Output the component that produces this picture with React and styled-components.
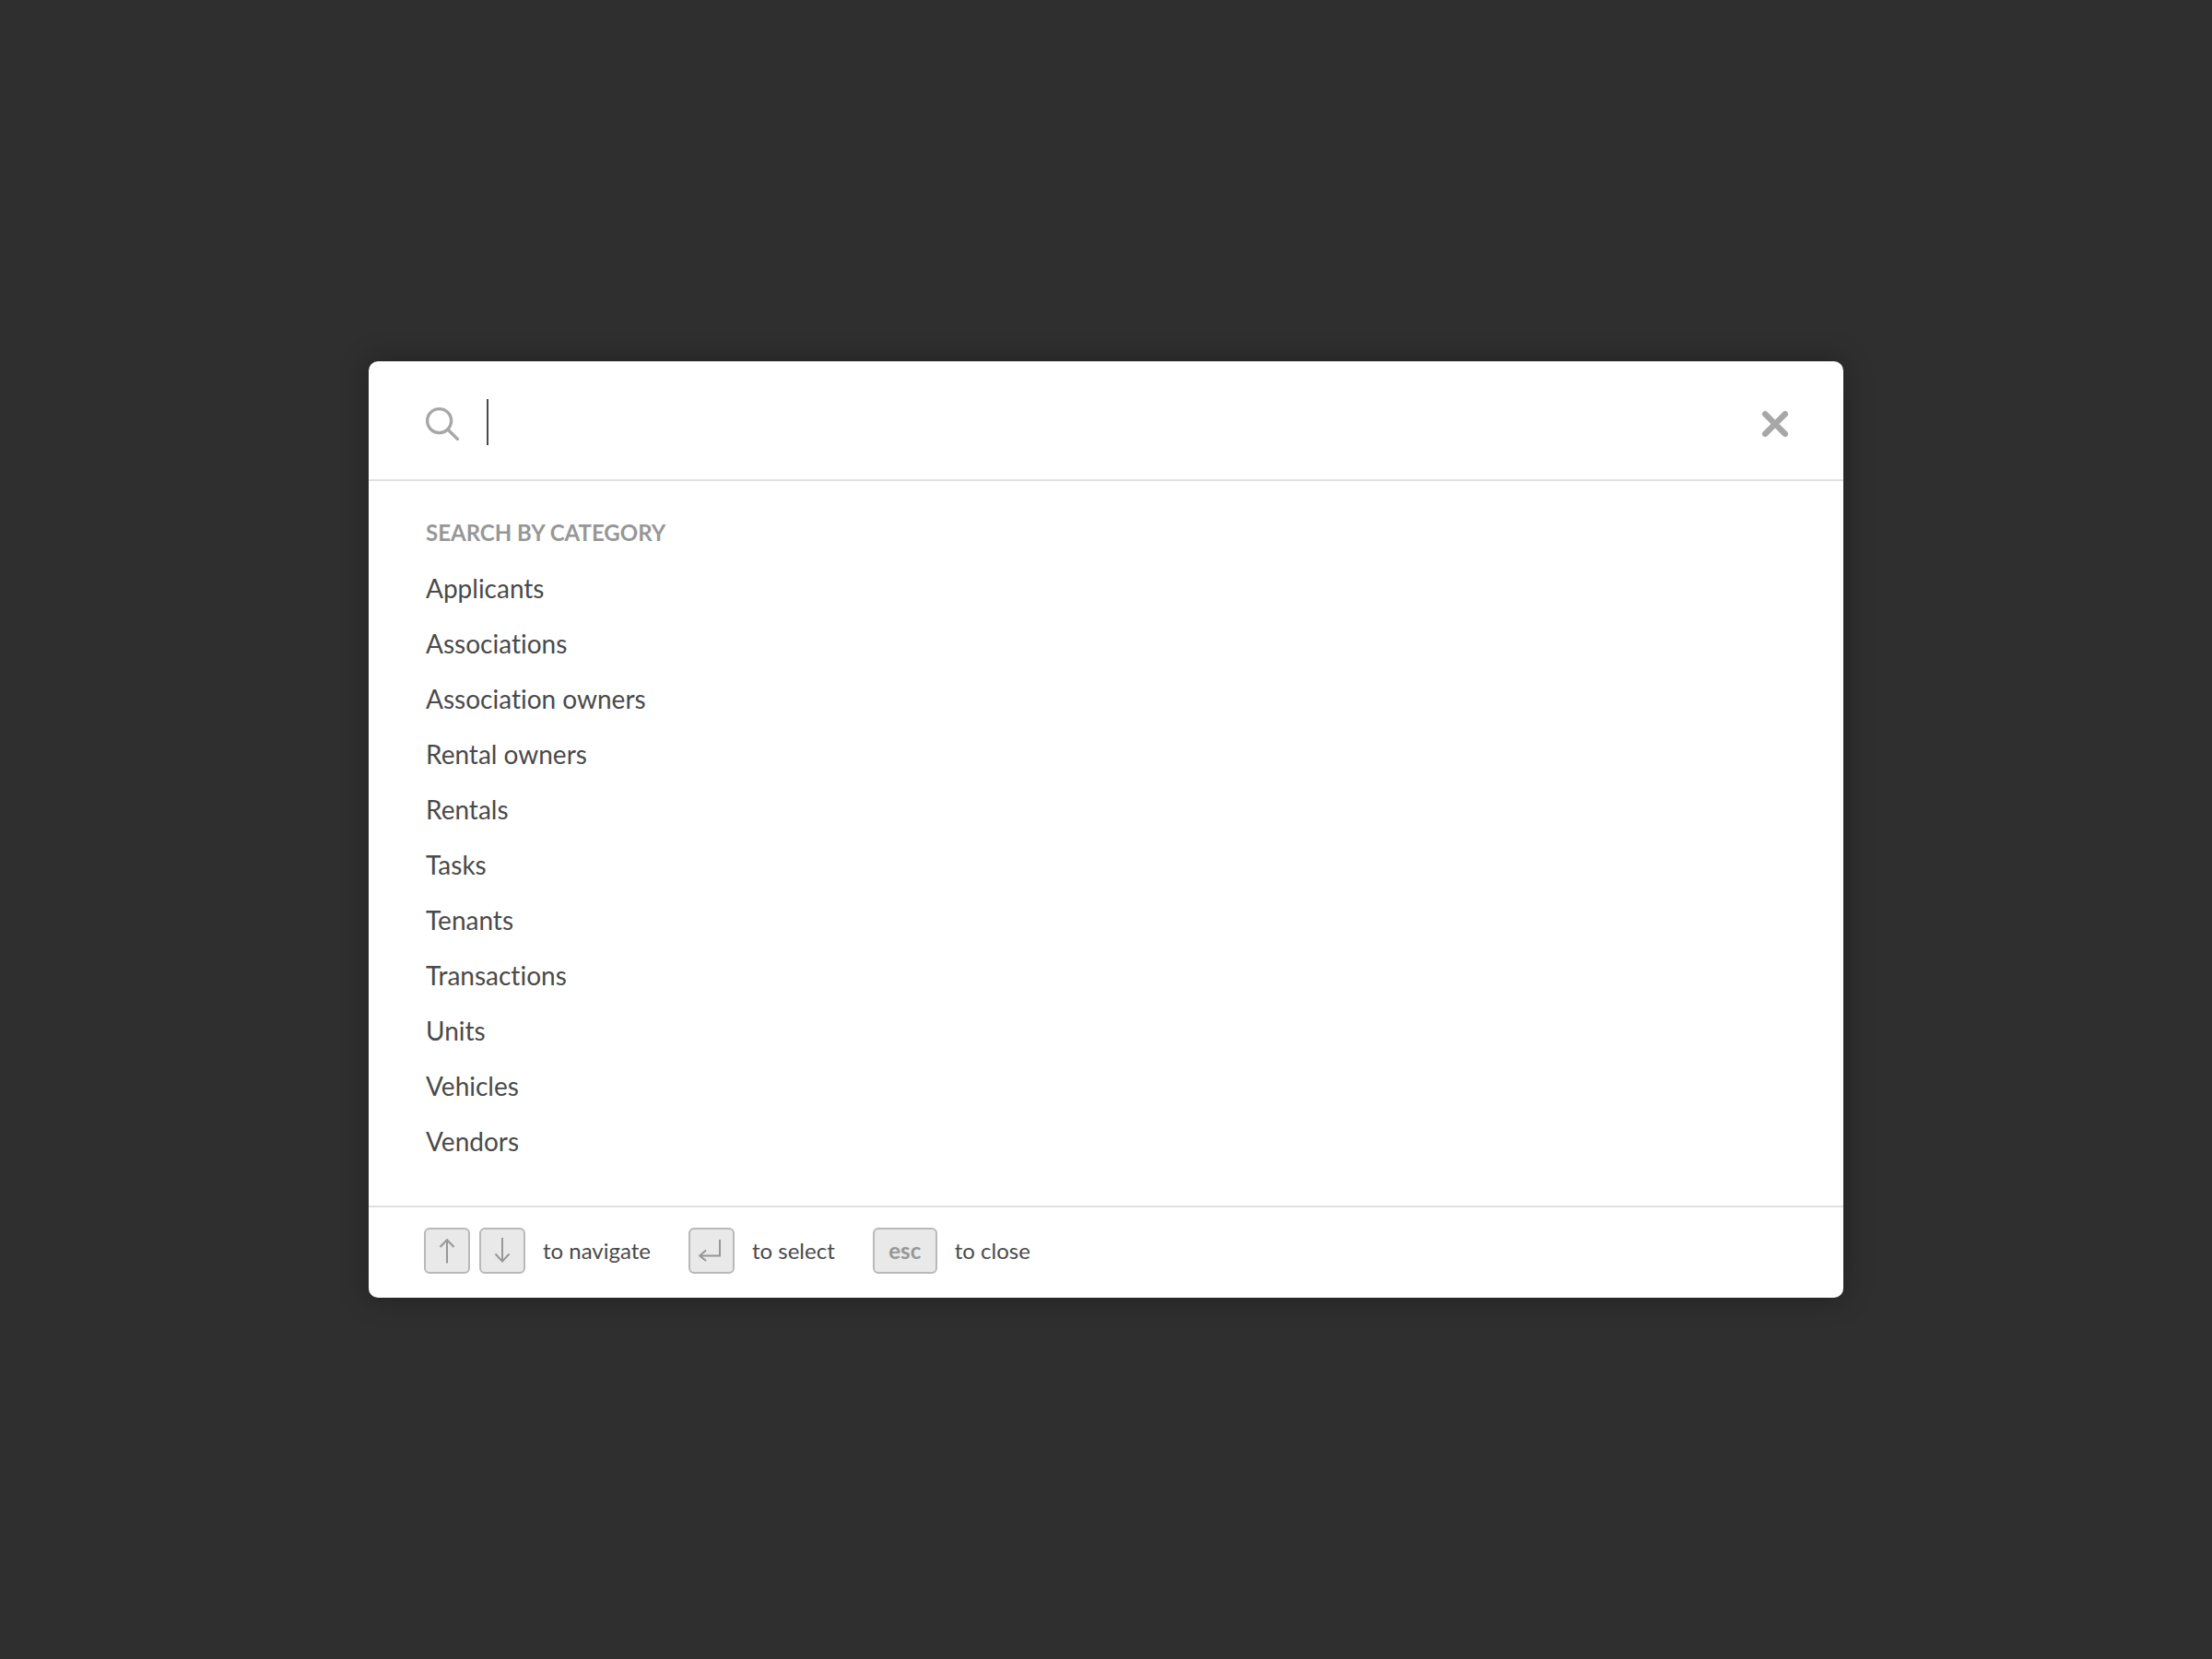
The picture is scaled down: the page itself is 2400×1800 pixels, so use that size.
import React, { useState } from "react";
import styled, { createGlobalStyle } from "styled-components";

const GlobalStyle = createGlobalStyle`
  *, *::before, *::after { box-sizing: border-box; }
  body {
    margin: 0;
    background: #2f2f2f;
    color: #4a4a4a;
    font-family: Lato, "Open Sans", sans-serif;
    font-variant-ligatures: none;
  }
`;

const Page = styled.main`
  min-height: 100vh;
  display: flex;
  align-items: center;
  justify-content: center;
  padding: 40px;
`;

const Dialog = styled.section`
  width: 100%;
  max-width: 1600px;
  background: #ffffff;
  border-radius: 10px;
  box-shadow: 0 0 32px rgba(0, 0, 0, 0.3);
`;

const SearchBar = styled.form`
  display: flex;
  align-items: center;
  padding: 40px 56px 36px 60px;
  border-bottom: 2px solid #e0e0e0;
`;

const SearchLabel = styled.label`
  display: flex;
  margin-right: 28px;
`;

const Caret = styled.span`
  flex: none;
  width: 2px;
  height: 50px;
  background: #4a4a4a;
`;

const SearchInput = styled.input`
  flex: 1;
  min-width: 0;
  height: 52px;
  padding: 0;
  border: 0;
  outline: 0;
  background: transparent;
  color: inherit;
  caret-color: transparent;
  font-family: inherit;
  font-size: 40px;
`;

const CloseButton = styled.button`
  display: flex;
  padding: 0;
  border: 0;
  background: transparent;
  cursor: pointer;
`;

const Categories = styled.div`
  padding: 42px 60px 40px;
`;

const Heading = styled.h2`
  margin: 0 0 16px;
  padding-left: 2px;
  color: #979797;
  font-size: 24px;
  font-weight: 700;
  line-height: 28px;
  text-transform: uppercase;
`;

const CategoryList = styled.ul`
  margin: 0;
  padding: 0;
  list-style: none;
`;

const CategoryButton = styled.button`
  display: block;
  width: 100%;
  height: 60px;
  padding: 0 2px;
  border: 0;
  background: transparent;
  color: inherit;
  font-family: inherit;
  font-variant-ligatures: inherit;
  font-size: 28px;
  line-height: 60px;
  text-align: left;
  cursor: pointer;
`;

const Footer = styled.footer`
  display: flex;
  flex-wrap: wrap;
  gap: 41px;
  padding: 22px 60px 26px;
  border-top: 2px solid #e0e0e0;
`;

const Hint = styled.div`
  display: flex;
  align-items: center;
  font-size: 24px;
  line-height: 28px;
`;

const Keys = styled.span`
  display: flex;
  gap: 10px;
  margin-right: 19px;
`;

const Key = styled.kbd`
  display: flex;
  align-items: center;
  justify-content: center;
  width: ${(p) => (p.$wide ? "70px" : "50px")};
  height: 50px;
  border: 2px solid #b9b9b9;
  border-radius: 6px;
  background: #e9e9e9;
  color: #979797;
  font-family: inherit;
  font-size: 24px;
  font-weight: 700;
  line-height: 28px;
`;

const SearchIcon = () => (
  <svg width="40" height="40" viewBox="0 0 40 40" fill="none" stroke="#a7a7a7" aria-hidden="true">
    <circle cx="16.6" cy="18.6" r="13" strokeWidth="3.4" />
    <path d="M26.2 28.2 36.4 38.4" strokeWidth="3.4" strokeLinecap="round" />
  </svg>
);

const CloseIcon = () => (
  <svg width="36" height="36" viewBox="0 0 36 36" fill="none" stroke="#a7a7a7" aria-hidden="true">
    <path d="M7.2 9.2 28.8 30.8M28.8 9.2 7.2 30.8" strokeWidth="6.4" strokeLinecap="round" />
  </svg>
);

const keyPaths = {
  up: "M23 36.5V11M15.5 19 23 11.2 30.5 19",
  down: "M23 9V34.8M15.5 26.5 23 34.6 30.5 26.5",
  enter: "M32 11V28.5H10.5M17 22.5 10.2 28.5 17 34",
};

const KeyIcon = ({ name }) => (
  <svg
    width="46"
    height="46"
    viewBox="0 0 46 46"
    fill="none"
    stroke="#979797"
    strokeWidth="2"
    role="img"
    aria-label={name}
  >
    <path d={keyPaths[name]} />
  </svg>
);

const categories = [
  "Applicants",
  "Associations",
  "Association owners",
  "Rental owners",
  "Rentals",
  "Tasks",
  "Tenants",
  "Transactions",
  "Units",
  "Vehicles",
  "Vendors",
];

export default function App() {
  const [query, setQuery] = useState("");

  return (
    <>
      <GlobalStyle />
      <Page>
        <Dialog role="dialog" aria-label="Search">
          <SearchBar role="search" onSubmit={(e) => e.preventDefault()}>
            <SearchLabel htmlFor="query" aria-label="Search">
              <SearchIcon />
            </SearchLabel>
            {query === "" && <Caret />}
            <SearchInput
              id="query"
              type="text"
              autoComplete="off"
              value={query}
              onChange={(e) => setQuery(e.target.value)}
            />
            <CloseButton type="button" aria-label="Close">
              <CloseIcon />
            </CloseButton>
          </SearchBar>

          <Categories>
            <Heading>Search by category</Heading>
            <CategoryList>
              {categories.map((name) => (
                <li key={name}>
                  <CategoryButton type="button">{name}</CategoryButton>
                </li>
              ))}
            </CategoryList>
          </Categories>

          <Footer>
            <Hint>
              <Keys>
                <Key><KeyIcon name="up" /></Key>
                <Key><KeyIcon name="down" /></Key>
              </Keys>
              to navigate
            </Hint>
            <Hint>
              <Keys>
                <Key><KeyIcon name="enter" /></Key>
              </Keys>
              to select
            </Hint>
            <Hint>
              <Keys>
                <Key $wide>esc</Key>
              </Keys>
              to close
            </Hint>
          </Footer>
        </Dialog>
      </Page>
    </>
  );
}
